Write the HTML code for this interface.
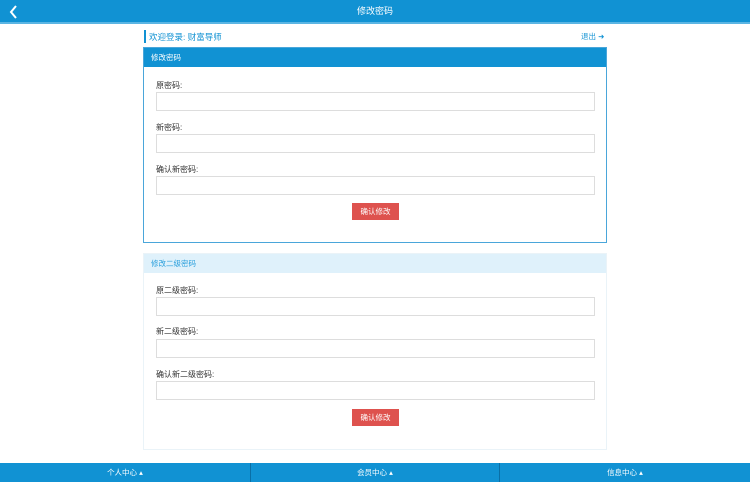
<!DOCTYPE html>
<html><head><meta charset="utf-8"><style>
body{margin:0;width:750px;height:482px;position:relative;background:#fff;font-family:"Liberation Sans","Noto Sans CJK SC",sans-serif;font-size:8px;overflow:hidden}
.a{position:absolute}
.hdr{left:0;top:0;width:750px;height:22px;background:#1192d3;border-bottom:2px solid #5bb5e3;color:#fff;text-align:center;line-height:23px;font-size:9px}
.inp{position:absolute;left:156px;width:437px;height:17px;border:1px solid #ddd;background:#fff}
.lbl{position:absolute;left:156px;color:#333;font-size:8px}
.btn{position:absolute;left:352px;width:47px;height:17px;background:#de524e;color:#fff;text-align:center;line-height:17px;font-size:7.5px}
.ft{top:463px;height:19px;background:#1192d3;color:#fff;text-align:center;line-height:19px;font-size:7.5px}
</style></head><body>
<div class="a hdr">修改密码</div>
<svg class="a" style="left:9px;top:5px" width="10" height="14"><path d="M7 1 L2 7 L7 13" stroke="#fff" stroke-width="2" fill="none"/></svg>
<div class="a" style="left:144px;top:30px;width:2px;height:13px;background:#1192d3"></div>
<div class="a" style="left:149px;top:31px;color:#1192d3;font-size:8.5px">欢迎登录: 财富导师</div>
<div class="a" style="left:581px;top:31px;color:#1192d3;font-size:7.5px">退出 ➜</div>
<div class="a" style="left:143px;top:47px;width:462px;height:194px;border:1px solid #4aa6da"></div>
<div class="a" style="left:144px;top:48px;width:462px;height:19px;background:#1192d3;color:#fff;line-height:19px;text-indent:7px;font-size:7.5px">修改密码</div>
<div class="lbl" style="top:80px">原密码:</div><div class="inp" style="top:92px"></div>
<div class="lbl" style="top:122px">新密码:</div><div class="inp" style="top:134px"></div>
<div class="lbl" style="top:164px">确认新密码:</div><div class="inp" style="top:176px"></div>
<div class="btn" style="top:203px">确认修改</div>
<div class="a" style="left:143px;top:253px;width:462px;height:195px;border:1px solid #eaf3f8"></div>
<div class="a" style="left:144px;top:254px;width:462px;height:19px;background:#dff1fb;color:#2a9fdc;line-height:19px;text-indent:7px;font-size:7.5px">修改二级密码</div>
<div class="lbl" style="top:285px">原二级密码:</div><div class="inp" style="top:297px"></div>
<div class="lbl" style="top:326px">新二级密码:</div><div class="inp" style="top:339px"></div>
<div class="lbl" style="top:369px">确认新二级密码:</div><div class="inp" style="top:381px"></div>
<div class="btn" style="top:409px">确认修改</div>
<div class="a ft" style="left:0;width:750px"></div>
<div class="a ft" style="left:0;width:250px">个人中心 ▴</div>
<div class="a ft" style="left:251px;width:248px">会员中心 ▴</div>
<div class="a ft" style="left:500px;width:250px">信息中心 ▴</div>
<div class="a" style="left:250px;top:463px;width:1px;height:19px;background:#0a6fa6"></div>
<div class="a" style="left:499px;top:463px;width:1px;height:19px;background:#0a6fa6"></div>
</body></html>
